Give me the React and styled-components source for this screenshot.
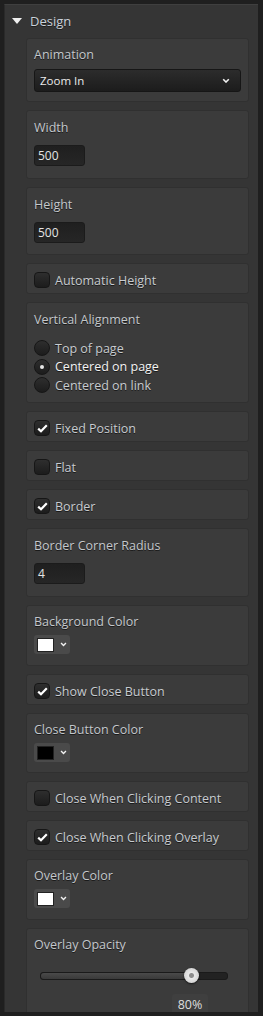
import React, { useState } from 'react';
import styled, { createGlobalStyle } from 'styled-components';

const GlobalStyle = createGlobalStyle`
  html, body {
    margin: 0;
    padding: 0;
    background: #1e1e1e;
  }
  body {
    font-family: "Open Sans", "DejaVu Sans", sans-serif;
    font-size: 12px;
    color: #d0d0d0;
  }
`;

const Frame = styled.div`
  width: 263px;
  height: 1016px;
  overflow: hidden;
  background: #1f1f1f;
  padding: 4px 5px 0 4px;
  box-sizing: border-box;
`;

const Panel = styled.div`
  background: #353535;
  border-top: 1px solid #3f3f3f;
  border-left: 1px solid #2a2a2a;
  height: 1008px;
  overflow: hidden;
  box-sizing: border-box;
`;

const Header = styled.div`
  display: flex;
  align-items: center;
  gap: 8px;
  height: 31px;
  padding-left: 7px;
  color: #c9d1da;
  font-size: 13px;
  text-shadow: 0 1px 0 #1c1c1c;
`;

const Triangle = styled.span`
  width: 0;
  height: 0;
  border-left: 5px solid transparent;
  border-right: 5px solid transparent;
  border-top: 6px solid #f0f0f0;
  margin-top: 1px;
`;

const List = styled.div`
  display: flex;
  flex-direction: column;
  gap: 8px;
  margin: 2px 9px 0 21px;
`;

const Card = styled.div`
  background: #3b3b3b;
  border: 1px solid #303030;
  border-radius: 3px;
  padding: ${(p) => p.$pad || '6px 7px 0'};
  box-sizing: border-box;
  height: ${(p) => (p.$h ? `${p.$h}px` : 'auto')};
  flex-shrink: 0;
`;

const CheckRowCard = styled(Card)`
  display: flex;
  align-items: center;
  padding: 3px 7px 0;
`;

const Label = styled.div`
  color: #c4c8cc;
  font-size: 12.5px;
  line-height: 20px;
  text-shadow: 0 1px 0 #1a1a1a;
  margin-bottom: ${(p) => p.$mb ?? 6}px;
`;

const Select = styled.div`
  display: flex;
  align-items: center;
  justify-content: space-between;
  height: 23px;
  padding: 0 10px 0 5px;
  border-radius: 3px;
  border: 1px solid #161616;
  background: linear-gradient(#2c2c2c, #1c1c1c);
  color: #eaeaea;
  font-size: 11.5px;
  box-sizing: border-box;
`;

const Chevron = ({ size = 8 }) => (
  <svg width={size} height={size * 0.7} viewBox="0 0 10 7">
    <path d="M1.5 1.5 L5 5 L8.5 1.5" stroke="#f2f2f2" strokeWidth="2" fill="none" />
  </svg>
);

const TextInput = styled.div`
  width: 51px;
  height: 21px;
  border-radius: 3px;
  border: 1px solid #1b1b1b;
  background: linear-gradient(#1f1f1f, #262626);
  color: #e4e4e4;
  font-size: 12px;
  line-height: 19px;
  padding-left: 3px;
  box-sizing: border-box;
`;

const Row = styled.label`
  display: flex;
  align-items: center;
  gap: 5px;
  height: 18.5px;
  color: ${(p) => (p.$active ? '#f4f4f4' : '#c8ccd0')};
  font-size: 12.5px;
  text-shadow: 0 1px 0 #1a1a1a;
`;

const Box = styled.span`
  width: 16px;
  height: 16px;
  border-radius: 4px;
  border: 1px solid #161616;
  background: linear-gradient(#2e2e2e, #1c1c1c);
  box-sizing: border-box;
  display: flex;
  align-items: center;
  justify-content: center;
  flex-shrink: 0;
`;

const Radio = styled(Box)`
  border-radius: 50%;
  &::after {
    content: '';
    display: ${(p) => (p.$on ? 'block' : 'none')};
    width: 4px;
    height: 4px;
    border-radius: 50%;
    background: #e8e8e8;
  }
`;

const Check = () => (
  <svg width="11" height="9" viewBox="0 0 11 9">
    <path d="M1.2 4.6 L4 7.3 L9.8 1.3" stroke="#ffffff" strokeWidth="2.2" fill="none" />
  </svg>
);

const Swatch = styled.div`
  display: flex;
  align-items: center;
  gap: 6px;
  width: 36px;
  height: 19px;
  border-radius: 3px;
  background: #4a4a4a;
  padding-left: 3px;
  box-sizing: border-box;
  &::before {
    content: '';
    width: 17px;
    height: 14px;
    background: ${(p) => p.$color};
    border: 1px solid #222;
    box-sizing: border-box;
  }
`;

const Slider = styled.div`
  position: relative;
  margin: 17px 13px 0 6px;
  height: 6px;
  border-radius: 3px;
  border: 1px solid #1a1a1a;
  background: #222;
`;

const Fill = styled.div`
  height: 100%;
  border-radius: 3px;
  background: linear-gradient(#4a4a4a, #3a3a3a);
`;

const Thumb = styled.div`
  position: absolute;
  top: 50%;
  width: 15px;
  height: 15px;
  margin: -8px 0 0 -6px;
  border-radius: 50%;
  background: radial-gradient(circle at 50% 50%, #8c8c8c 0 2px, #e8e8e8 3px, #c8c8c8 100%);
  box-shadow: 0 1px 2px rgba(0, 0, 0, 0.6);
`;

const Value = styled.div`
  width: 36px;
  margin: 14px 0 0 138px;
  padding: 2px 0 6px;
  text-align: center;
  background: #3f3f3f;
  border-radius: 3px 3px 0 0;
  color: #dedede;
  font-size: 12.5px;
`;

const CheckCard = ({ label, on }) => (
  <CheckRowCard $h={31}>
    <Row>
      <Box>{on && <Check />}</Box>
      {label}
    </Row>
  </CheckRowCard>
);

const ColorCard = ({ label, color, h = 61 }) => (
  <Card $pad="6px 7px 0" $h={h}>
    <Label $mb={3}>{label}</Label>
    <Swatch $color={color}>
      <Chevron size={7} />
    </Swatch>
  </Card>
);

const InputCard = ({ label, value, h = 69 }) => (
  <Card $pad="7px 7px 0" $h={h}>
    <Label $mb={7}>{label}</Label>
    <TextInput>{value}</TextInput>
  </Card>
);

export default function App() {
  const [align] = useState(1);
  const opacity = 80;
  const alignments = ['Top of page', 'Centered on page', 'Centered on link'];

  return (
    <>
      <GlobalStyle />
      <Frame>
        <Panel>
          <Header>
            <Triangle />
            Design
          </Header>
          <List>
            <Card $pad="6px 7px 0" $h={64}>
              <Label $mb={4}>Animation</Label>
              <Select>
                Zoom In
                <Chevron />
              </Select>
            </Card>
            <InputCard label="Width" value="500" />
            <InputCard label="Height" value="500" h={68} />
            <CheckCard label="Automatic Height" />
            <Card $pad="7px 7px 0" $h={101}>
              <Label $mb={9}>Vertical Alignment</Label>
              {alignments.map((a, i) => (
                <Row key={a} $active={i === align}>
                  <Radio $on={i === align} />
                  {a}
                </Row>
              ))}
            </Card>
            <CheckCard label="Fixed Position" on />
            <CheckCard label="Flat" />
            <CheckCard label="Border" on />
            <InputCard label="Border Corner Radius" value="4" />
            <ColorCard label="Background Color" color="#ffffff" />
            <CheckCard label="Show Close Button" on />
            <ColorCard label="Close Button Color" color="#000000" h={60} />
            <CheckCard label="Close When Clicking Content" />
            <CheckCard label="Close When Clicking Overlay" on />
            <ColorCard label="Overlay Color" color="#ffffff" />
            <Card $pad="6px 7px 0" $h={90}>
              <Label $mb={0}>Overlay Opacity</Label>
              <Slider>
                <Fill style={{ width: `${opacity}%` }} />
                <Thumb style={{ left: `${opacity}%` }} />
              </Slider>
              <Value>{opacity}%</Value>
            </Card>
          </List>
        </Panel>
      </Frame>
    </>
  );
}
